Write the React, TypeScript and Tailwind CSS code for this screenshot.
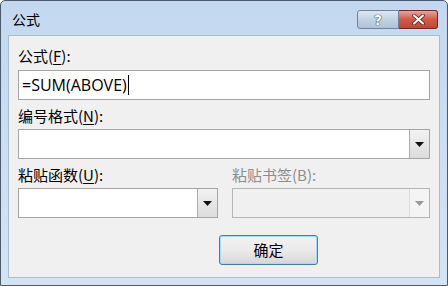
const cjk = "font-['Microsoft_YaHei','Noto_Sans_CJK_SC',sans-serif]";

function Arrow({ disabled }: { disabled?: boolean }) {
  return (
    <div
      className={
        disabled
          ? "w-[20px] h-full border-l border-[#dcdcdc] bg-[#f4f4f4] flex items-center justify-center"
          : "w-[20px] h-full border-l border-[#acacac] bg-gradient-to-b from-[#f2f2f2] to-[#dcdcdc] flex items-center justify-center"
      }
    >
      <svg width="9" height="5" viewBox="0 0 9 5">
        <path d="M0 0h9L4.5 5z" fill={disabled ? "#9a9a9a" : "#111"} />
      </svg>
    </div>
  );
}

function Combo({ disabled, className }: { disabled?: boolean; className?: string }) {
  return (
    <div
      className={
        "h-[30px] flex border " +
        (disabled ? "border-[#b5b5b5] bg-[#f0f0f0] " : "border-[#a5a5a5] bg-white ") +
        (className ?? "")
      }
    >
      <div className="flex-1" />
      <Arrow disabled={disabled} />
    </div>
  );
}

export default function App() {
  return (
    <div className="w-[448px] h-[286px] border border-[#4a5a6c] bg-gradient-to-b from-[#c3d8ef] to-[#d5e4f3] flex flex-col rounded-t-[5px] overflow-hidden">
      {/* title bar */}
      <div className="h-[34px] flex items-start shrink-0">
        <span className={`${cjk} text-[14px] text-black pl-[11px] pt-[8px]`}>公式</span>
        <div className="ml-auto flex mt-[9px] mr-[9px]">
          <div className="w-[42px] h-[19px] rounded-l-[3px] border border-[#6f8299] bg-gradient-to-b from-[#dce7f3] via-[#c2d2e4] to-[#aec2d9] flex items-center justify-center">
            <span className="font-['DejaVu_Sans',sans-serif] font-bold text-[14px] text-white leading-none [text-shadow:0_0_1px_#223,0_0_1px_#223]">?</span>
          </div>
          <div className="w-[39px] h-[19px] rounded-r-[3px] border border-l-0 border-[#6b2a22] bg-gradient-to-b from-[#e7a497] via-[#cf5a48] to-[#c44535] flex items-center justify-center">
            <svg width="13" height="11" viewBox="0 0 13 11">
              <path d="M2 1.5L11 9.5M11 1.5L2 9.5" stroke="#4a1a14" strokeWidth="3.6" strokeLinecap="round" />
              <path d="M2 1.5L11 9.5M11 1.5L2 9.5" stroke="#fff" strokeWidth="2.2" strokeLinecap="round" />
            </svg>
          </div>
        </div>
      </div>

      {/* client area */}
      <div className="flex-1 mx-[7px] mb-[7px] bg-[#f0f0f0] border border-[#a8bcd4] px-[9px] pt-[10px] flex flex-col">
        <label className={`${cjk} text-[15px] text-black leading-[20px]`}>
          公式(<span className="underline underline-offset-2">F</span>):
        </label>
        <div className="mt-[4px] h-[30px] border border-[#a5a5a5] bg-white flex items-center pl-[3px]">
          <span className="font-['Segoe_UI','Open_Sans',sans-serif] text-[16px] text-black leading-none">=SUM(ABOVE)</span>
          <span className="w-px h-[20px] bg-black ml-[1px]" />
        </div>

        <label className={`${cjk} text-[15px] text-black leading-[20px] mt-[6px]`}>
          编号格式(<span className="underline underline-offset-2">N</span>):
        </label>
        <Combo className="mt-[3px]" />

        <div className="flex gap-[14px] mt-[6px]">
          <div className="w-[200px] flex flex-col">
            <label className={`${cjk} text-[15px] text-black leading-[20px]`}>
              粘贴函数(<span className="underline underline-offset-2">U</span>):
            </label>
            <Combo className="mt-[3px]" />
          </div>
          <div className="flex-1 flex flex-col">
            <label className={`${cjk} text-[15px] text-[#8d8d8d] leading-[20px]`}>粘贴书签(B):</label>
            <Combo disabled className="mt-[3px]" />
          </div>
        </div>

        <div className="flex mt-[17px]">
          <button className={`${cjk} ml-[201px] w-[99px] h-[30px] rounded-[3px] border border-[#3c7fb1] shadow-[inset_0_0_0_1px_#a6dbf4] bg-gradient-to-b from-[#f2f2f2] via-[#ebebeb] to-[#d6d6d6] text-[15px] text-black`}>
            确定
          </button>
        </div>
      </div>
    </div>
  );
}
